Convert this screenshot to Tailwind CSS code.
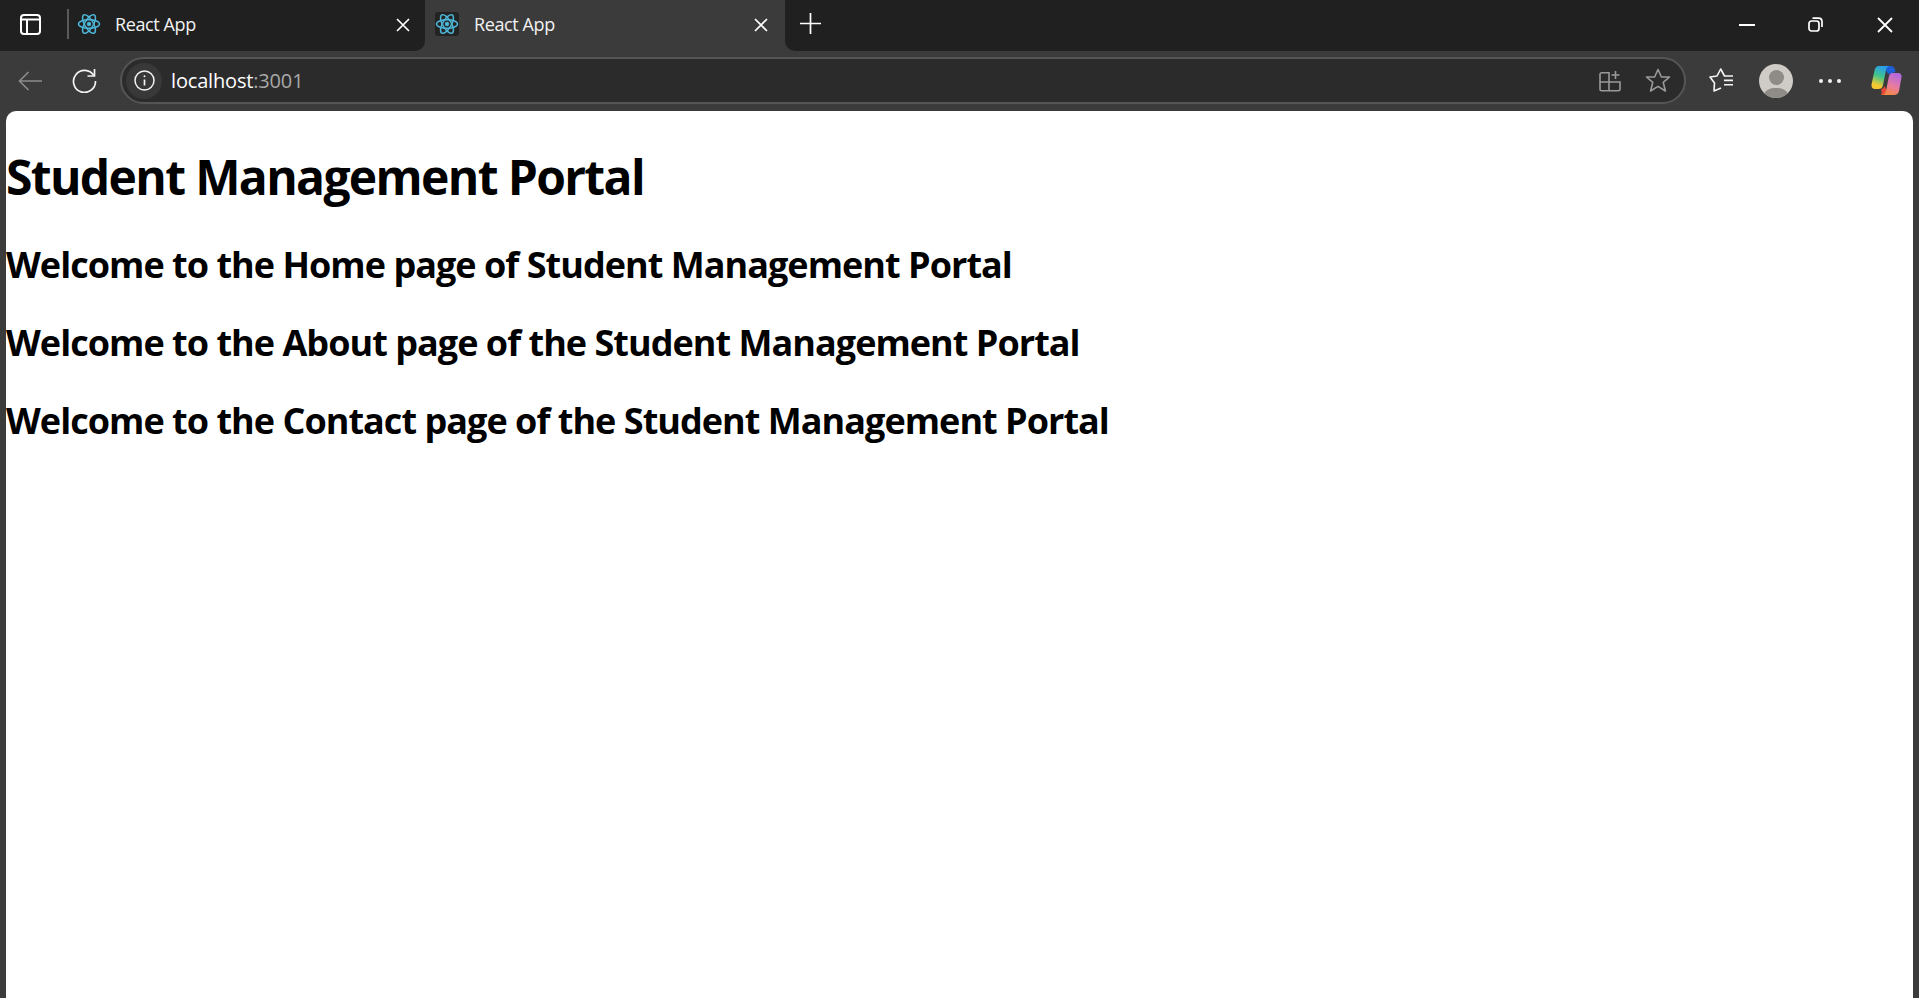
<!DOCTYPE html>
<html lang="en">

<head>
  <meta charset="UTF-8">
  <title>React App</title>
  <script src="https://cdn.jsdelivr.net/npm/@tailwindcss/browser@4"></script>
</head>

<body class="h-[998px] overflow-hidden bg-[#3b3b3b] font-['Open_Sans',sans-serif] text-white flex flex-col">
  <!-- tab strip -->
  <div class="flex h-[51px] shrink-0">
    <div class="w-[425px] bg-[#202020] rounded-br-[10px] flex items-center pl-[20px] pb-[3px]">
      <svg width="21" height="21" viewBox="0 0 21 21" fill="none" stroke="#fff" stroke-width="2">
        <rect x="1" y="1" width="19" height="19" rx="3" />
        <path d="M1 5.5H20M7 5.5V20" />
      </svg>
      <div class="w-[2px] h-[30px] bg-[#5a5a5a] ml-[26px]"></div>
      <svg class="ml-[8px]" width="24" height="24" viewBox="-12 -12 24 24" fill="none" stroke="#4db6d6" stroke-width="1.5">
        <ellipse rx="10.5" ry="4.3" />
        <ellipse rx="10.5" ry="4.3" transform="rotate(60)" />
        <ellipse rx="10.5" ry="4.3" transform="rotate(120)" />
        <circle r="2.2" fill="#4db6d6" stroke="none" />
      </svg>
      <span class="ml-[14px] text-[18px] tracking-[-0.4px] text-[#f2f2f2]">React App</span>
      <svg class="ml-auto mr-[15px] mt-[2px]" width="14" height="14" viewBox="0 0 14 14" stroke="#fff" stroke-width="1.7">
        <path d="M1 1L13 13M13 1L1 13" />
      </svg>
    </div>
    <div class="w-[360px] rounded-t-[12px] flex items-center pl-[10px] pb-[3px]">
      <div class="w-[24px] h-[24px] rounded-[3px] bg-[#232323] flex items-center justify-center">
        <svg width="24" height="24" viewBox="-12 -12 24 24" fill="none" stroke="#4db6d6" stroke-width="1.5">
          <ellipse rx="10.5" ry="4.3" />
          <ellipse rx="10.5" ry="4.3" transform="rotate(60)" />
          <ellipse rx="10.5" ry="4.3" transform="rotate(120)" />
          <circle r="2.2" fill="#4db6d6" stroke="none" />
        </svg>
      </div>
      <span class="ml-[15px] text-[18px] tracking-[-0.4px] text-[#f2f2f2]">React App</span>
      <svg class="ml-auto mr-[17px] mt-[2px]" width="14" height="14" viewBox="0 0 14 14" stroke="#fff" stroke-width="1.7">
        <path d="M1 1L13 13M13 1L1 13" />
      </svg>
    </div>
    <div class="flex-1 bg-[#202020] rounded-bl-[10px] flex items-center pl-[15px]">
      <svg class="mb-[5px]" width="21" height="21" viewBox="0 0 21 21" stroke="#fff" stroke-width="1.7">
        <path d="M10.5 0V21M0 10.5H21" />
      </svg>
      <svg class="ml-auto mb-[2px]" width="16" height="2" viewBox="0 0 16 2" stroke="#fff" stroke-width="2">
        <path d="M0 1H16" />
      </svg>
      <svg class="ml-[53px] mb-[2px]" width="15" height="15" viewBox="0 0 15 15" fill="none" stroke="#fff" stroke-width="1.7">
        <rect x="1" y="4" width="10" height="10" rx="2.5" />
        <path d="M4.5 1.2H10.5C12.7 1.2 14 2.6 14 4.6V10" />
      </svg>
      <svg class="ml-[54px] mr-[26px] mb-[2px]" width="16" height="16" viewBox="0 0 16 16" stroke="#fff" stroke-width="1.8">
        <path d="M1 1L15 15M15 1L1 15" />
      </svg>
    </div>
  </div>

  <!-- toolbar -->
  <div class="flex items-center h-[60px] shrink-0 pb-[1px]">
    <svg class="ml-[18px]" width="24" height="20" viewBox="0 0 24 20" fill="none" stroke="#8c8c8c" stroke-width="1.6">
      <path d="M24 10H1.5M10.5 1L1.5 10L10.5 19" />
    </svg>
    <svg class="ml-[30px]" width="25" height="25" viewBox="0 0 25 25" fill="none" stroke="#f2f2f2" stroke-width="1.7">
      <path d="M21.8 7.5A11 11 0 1 0 23.5 13" />
      <path d="M22.5 1V8H15.5" />
    </svg>
    <div class="ml-[23px] w-[1566px] h-[47px] rounded-full border-2 border-[#555555] bg-[#2b2b2b] flex items-center pl-[4px] pr-[13px]">
      <div class="w-[36px] h-[36px] rounded-full bg-[#383838] flex items-center justify-center">
        <svg width="21" height="21" viewBox="0 0 21 21" fill="none" stroke="#f2f2f2" stroke-width="1.5">
          <circle cx="10.5" cy="10.5" r="9.5" />
          <path d="M10.5 9.5V15.5" stroke-width="1.7" />
          <circle cx="10.5" cy="6.3" r="1" fill="#f2f2f2" stroke="none" />
        </svg>
      </div>
      <span class="ml-[9px] text-[20px] tracking-[-0.17px] text-white">localhost<span class="text-[#a8a8a8]">:3001</span></span>
      <svg class="ml-auto" width="22" height="22" viewBox="0 0 22 22" fill="none" stroke="#9a9a9a" stroke-width="1.6">
        <path d="M1 4.5C1 3.5 1.7 2.8 2.7 2.8H10V20.8H2.7C1.7 20.8 1 20.1 1 19.1V4.5ZM1 12H21V19.1C21 20.1 20.3 20.8 19.3 20.8H10M10 12V2.8M16.5 1V9M12.5 5H20.5" />
      </svg>
      <svg class="ml-[24px]" width="26" height="25" viewBox="0 0 26 25" fill="none" stroke="#9a9a9a" stroke-width="1.6" stroke-linejoin="round">
        <path d="M13 1.5L16.4 9H24.5L18.2 14.3L20.4 23L13 18.4L5.6 23L7.8 14.3L1.5 9H9.6Z" />
      </svg>
    </div>
    <svg class="ml-[23px]" width="26" height="25" viewBox="0 0 26 25" fill="none" stroke="#f5f5f5" stroke-width="1.6" stroke-linejoin="round">
      <path d="M15.5 8L11.7 1L8 8L1 9L5.5 15L5 23L12 20" />
      <path d="M15 8H24M15 12.4H24M15 16.8H24" />
    </svg>
    <div class="ml-[24px] w-[34px] h-[34px] rounded-full bg-[#cfccc7] overflow-hidden flex flex-col items-center">
      <div class="w-[15px] h-[15px] rounded-full bg-[#8f8b87] mt-[6px] shrink-0"></div>
      <div class="w-[28px] h-[24px] rounded-full bg-[#8f8b87] mt-[3px] shrink-0"></div>
    </div>
    <div class="ml-[26px] flex gap-[5px]">
      <div class="w-[4px] h-[4px] rounded-full bg-[#f2f2f2]"></div>
      <div class="w-[4px] h-[4px] rounded-full bg-[#f2f2f2]"></div>
      <div class="w-[4px] h-[4px] rounded-full bg-[#f2f2f2]"></div>
    </div>
    <svg class="ml-[30px]" width="31" height="31" viewBox="0 0 31 31">
      <defs>
        <linearGradient id="copilotLeft" x1="0.6" y1="0" x2="0.3" y2="1">
          <stop offset="0" stop-color="#2a9bf0" />
          <stop offset="0.45" stop-color="#3fc58a" />
          <stop offset="0.85" stop-color="#f5c832" />
        </linearGradient>
        <linearGradient id="copilotRight" x1="0.7" y1="0" x2="0.3" y2="1">
          <stop offset="0" stop-color="#b068e0" />
          <stop offset="0.55" stop-color="#e87ba0" />
          <stop offset="1" stop-color="#f78a3c" />
        </linearGradient>
      </defs>
      <path d="M16 1H20C22.5 1 24 3 24.5 7L18 9C16.5 9 15.5 7 15 5Z" fill="#1c5fd6" />
      <path d="M8 1H19C16.5 1 15.5 3 15 5L12 20C11.6 22.5 10 24 7.5 24H4C1.5 24 0 22 .5 19.5L3.5 5.5C4 3 5.5 1 8 1Z" fill="url(#copilotLeft)" />
      <path d="M10 24C12 24 13 22.5 13.5 21L16 26C15.5 28.5 13 30 10 30C11 28 10.8 26 10 24Z" fill="#e8483a" />
      <path d="M21 8H27C29.5 8 31 10 30.5 12.5L28 26C27.5 28.5 25.5 30 23 30H10C12.5 30 14.5 28.5 15 26L18 11C18.4 9.5 19.5 8 21 8Z" fill="url(#copilotRight)" />
    </svg>
  </div>

  <!-- page -->
  <main class="flex-1 mx-[6px] bg-white rounded-t-[10px] text-black font-bold">
    <h1 class="text-[48px] leading-[60px] mt-[36px] tracking-[-1.65px]">Student Management Portal</h1>
    <h2 class="text-[36px] leading-[48px] mt-[34px] tracking-[-0.97px]">Welcome to the Home page of Student Management Portal</h2>
    <h2 class="text-[36px] leading-[48px] mt-[30px] tracking-[-0.97px]">Welcome to the About page of the Student Management Portal</h2>
    <h2 class="text-[36px] leading-[48px] mt-[30px] tracking-[-0.97px]">Welcome to the Contact page of the Student Management Portal</h2>
  </main>
</body>

</html>
